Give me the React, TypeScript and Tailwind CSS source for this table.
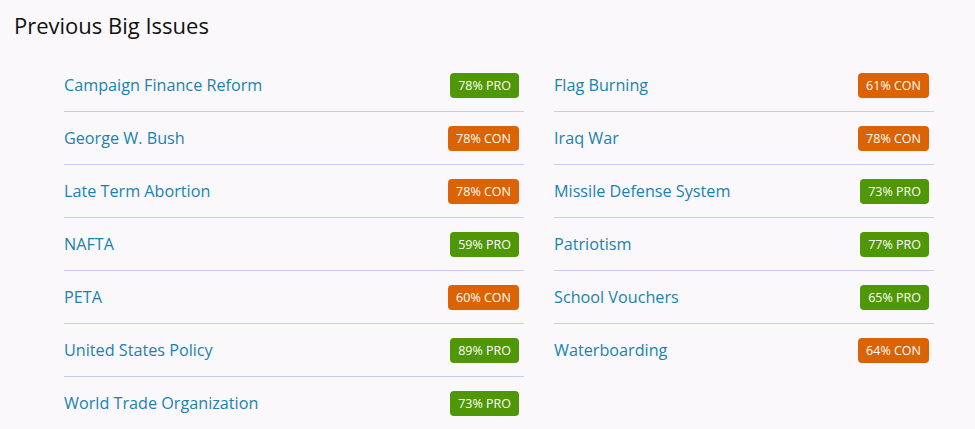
const left = [
  { name: "Campaign Finance Reform", pct: 78, side: "PRO" },
  { name: "George W. Bush", pct: 78, side: "CON" },
  { name: "Late Term Abortion", pct: 78, side: "CON" },
  { name: "NAFTA", pct: 59, side: "PRO" },
  { name: "PETA", pct: 60, side: "CON" },
  { name: "United States Policy", pct: 89, side: "PRO" },
  { name: "World Trade Organization", pct: 73, side: "PRO" },
];

const right = [
  { name: "Flag Burning", pct: 61, side: "CON" },
  { name: "Iraq War", pct: 78, side: "CON" },
  { name: "Missile Defense System", pct: 73, side: "PRO" },
  { name: "Patriotism", pct: 77, side: "PRO" },
  { name: "School Vouchers", pct: 65, side: "PRO" },
  { name: "Waterboarding", pct: 64, side: "CON" },
];

type Issue = { name: string; pct: number; side: string };

function Column({ items }: { items: Issue[] }) {
  return (
    <ul className="flex flex-col">
      {items.map((it, i) => (
        <li
          key={it.name}
          className={`flex h-[53px] items-center justify-between pr-[5px] ${
            i < items.length - 1 ? "border-b border-[#c3cff0]" : ""
          }`}
        >
          <a href="#" className="text-[16.2px] text-[#1a82b0]">
            {it.name}
          </a>
          <span
            className={`rounded-[4px] px-[8px] h-[25px] leading-[25px] text-[12.5px] text-white ${
              it.side === "PRO" ? "bg-[#4f9707]" : "bg-[#dc6303]"
            }`}
          >
            {it.pct}% {it.side}
          </span>
        </li>
      ))}
    </ul>
  );
}

export default function App() {
  return (
    <div
      className="min-h-[429px] bg-[#faf8fa]"
      style={{ fontFamily: '"Open Sans", sans-serif' }}
    >
      <h2 className="pt-[10px] pl-[14px] text-[22px] leading-[30px] text-[#111]">
        Previous Big Issues
      </h2>
      <div className="mt-[19px] grid grid-cols-[460px_380px] gap-x-[30px] pl-[64px]">
        <Column items={left} />
        <Column items={right} />
      </div>
    </div>
  );
}
